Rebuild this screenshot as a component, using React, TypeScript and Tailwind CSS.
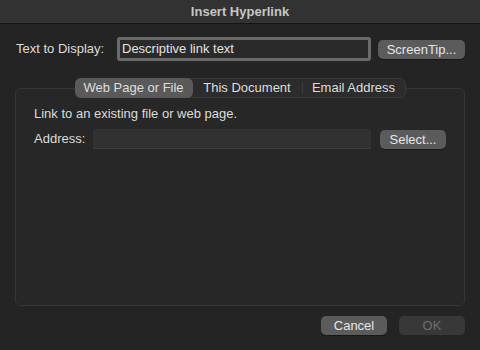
import React from 'react';

const font = { fontFamily: '"Liberation Sans", Arial, sans-serif' };

const Button = ({ label, className = '' }: { label: string; className?: string }) => (
  <button
    className={`h-[19px] rounded-[5px] bg-[#5b5b5b] text-[13px] leading-none text-[#e6e6e6] shadow-[0_1px_0_rgba(0,0,0,0.35)] ${className}`}
  >
    {label}
  </button>
);

const App: React.FC = () => {
  const tabs = ['Web Page or File', 'This Document', 'Email Address'];
  return (
    <div className="w-[480px] h-[350px] bg-[#242424] flex flex-col overflow-hidden" style={font}>
      <div className="h-[24px] shrink-0 bg-[#323232] border-b border-[#141414] flex items-center justify-center">
        <span className="text-[13px] font-bold text-[#c6c6c6]">Insert Hyperlink</span>
      </div>

      <div className="flex items-center mt-[13px] pl-[16px] h-[24px]">
        <span className="w-[101px] text-[13px] text-[#dcdcdc]">Text to Display:</span>
        <div className="w-[254px] h-[24px] rounded-[3px] border-[3px] border-[#6a6a6a] bg-[#2a2a2a] flex items-center px-[2px]">
          <span className="text-[13px] text-[#e2e2e2]">Descriptive link text</span>
        </div>
        <Button label="ScreenTip..." className="ml-[7px] w-[87px]" />
      </div>

      <div className="flex justify-center mt-[17px] -mb-[10px] relative z-10">
        <div className="flex items-center h-[20px] rounded-[6px] bg-[#2c2c2c] border border-[#3a3a3a] text-[13px] text-[#dedede]">
          <div className="h-[20px] -my-px -ml-px w-[118px] rounded-[6px] bg-[#5a5a5a] flex items-center justify-center">
            {tabs[0]}
          </div>
          <div className="w-[109px] flex items-center justify-center">{tabs[1]}</div>
          <div className="w-px h-[12px] bg-[#3c3c3c]" />
          <div className="w-[102px] flex items-center justify-center">{tabs[2]}</div>
        </div>
      </div>

      <div className="mx-[15px] h-[218px] rounded-[5px] border border-[#363636] bg-[#272727] pt-[17px] px-[18px]">
        <div className="text-[13px] text-[#dcdcdc] leading-[16px]">Link to an existing file or web page.</div>
        <div className="flex items-center mt-[7px] h-[20px]">
          <span className="w-[59px] text-[13px] text-[#dcdcdc]">Address:</span>
          <div className="w-[278px] h-[20px] bg-[#313131] border-b border-[#3d3d3d]" />
          <Button label="Select..." className="ml-[9px] w-[66px]" />
        </div>
      </div>

      <div className="flex justify-end gap-[12px] mt-[10px] pr-[15px]">
        <Button label="Cancel" className="w-[66px]" />
        <button className="h-[19px] w-[66px] rounded-[5px] bg-[#383838] text-[13px] leading-none text-[#6e6e6e]">
          OK
        </button>
      </div>
    </div>
  );
};

export default App;
